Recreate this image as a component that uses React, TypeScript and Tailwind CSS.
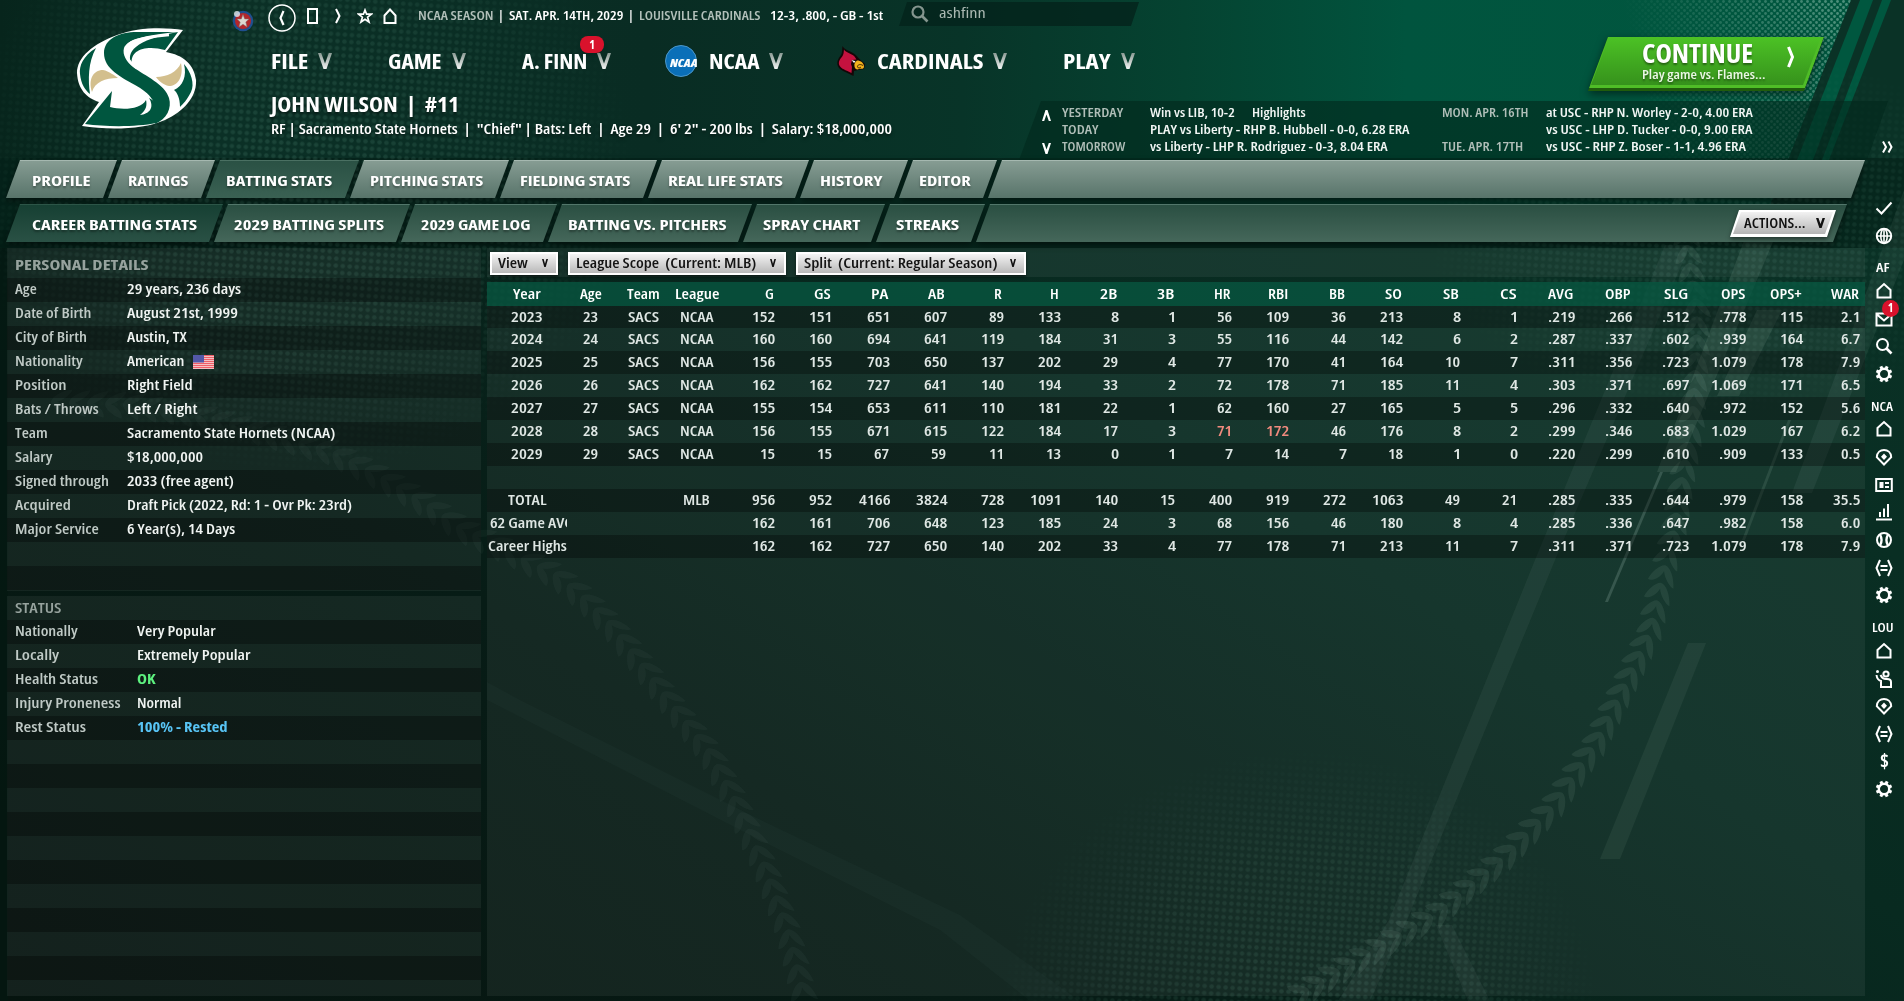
import { useLayoutEffect, useRef, useState } from 'react';
import type { ReactNode } from 'react';
import { clsx } from 'clsx';

interface FitProps {
  w: number;
  children: ReactNode;
  className?: string;
}

// Squeezes a single line of text horizontally so it takes exactly `w` pixels.
function Fit({ w, children, className }: FitProps) {
  const ref = useRef<HTMLSpanElement>(null);
  const [scale, setScale] = useState(1);

  useLayoutEffect(() => {
    if (ref.current) setScale(w / ref.current.offsetWidth);
  }, [w]);

  return (
    <span className={clsx('inline-block shrink-0 whitespace-pre', className)} style={{ width: w }}>
      <span ref={ref} className="inline-block origin-left" style={{ transform: `scaleX(${scale})` }}>
        {children}
      </span>
    </span>
  );
}

type Point = [number, number];

const rightSeam: Point[] = [
  [1684, 200], [1688, 253], [1697, 310], [1697, 350], [1692, 427], [1683, 477], [1674, 533], [1665, 567],
  [1650, 633], [1626, 683], [1596, 743], [1553, 807], [1505, 857], [1438, 913], [1341, 970], [1300, 995],
];

const leftSeam: Point[] = [
  [60, 402], [130, 405], [200, 415], [270, 435], [332, 452], [386, 480], [425, 503], [464, 530], [516, 555],
  [559, 577], [583, 597], [613, 627], [644, 667], [674, 707], [710, 753], [735, 800], [765, 867], [789, 933],
  [805, 1000],
];

function walk(points: Point[], step: number) {
  const out: { x: number; y: number; a: number }[] = [];
  let rest = 0;
  for (let i = 1; i < points.length; i++) {
    const [x0, y0] = points[i - 1];
    const [x1, y1] = points[i];
    const len = Math.hypot(x1 - x0, y1 - y0);
    const a = (Math.atan2(y1 - y0, x1 - x0) * 180) / Math.PI;
    let d = rest;
    while (d < len) {
      out.push({ x: x0 + ((x1 - x0) * d) / len, y: y0 + ((y1 - y0) * d) / len, a });
      d += step;
    }
    rest = d - len;
  }
  return out;
}

function Seam({ points, opacity }: { points: Point[]; opacity: number }) {
  return (
    <g fill="#8fb5a6" opacity={opacity}>
      {walk(points, 18).map((p, i) => (
        <path
          key={i}
          transform={`translate(${p.x} ${p.y}) rotate(${p.a - 90})`}
          d="M0 -9C5 -8 11 0 13 12C10 12 2 4 0 -3C-2 4 -10 10 -14 8C-12 0 -5 -9 0 -9Z"
        />
      ))}
    </g>
  );
}

function Backdrop() {
  return (
    <svg className="absolute inset-0" width="1904" height="1001" viewBox="0 0 1904 1001" aria-hidden="true">
      <defs>
        <linearGradient id="base" x1="0" y1="1" x2="1" y2="0.2">
          <stop offset="0" stopColor="#06140f" />
          <stop offset="0.35" stopColor="#071c16" />
          <stop offset="0.65" stopColor="#082a20" />
          <stop offset="1" stopColor="#0a3226" />
        </linearGradient>
        <linearGradient id="top" x1="0" x2="1850" gradientUnits="userSpaceOnUse">
          <stop offset="0" stopColor="#07251c" />
          <stop offset="0.12" stopColor="#0b3026" />
          <stop offset="0.35" stopColor="#092c23" />
          <stop offset="0.52" stopColor="#083428" />
          <stop offset="0.64" stopColor="#054331" />
          <stop offset="0.76" stopColor="#01543e" />
          <stop offset="1" stopColor="#00573f" />
        </linearGradient>
        <pattern id="dots" width="7" height="7" patternUnits="userSpaceOnUse" patternTransform="rotate(4)">
          <circle cx="3.5" cy="3.5" r="2.3" fill="#5f9c86" />
        </pattern>
        <pattern id="mesh" width="6" height="6" patternUnits="userSpaceOnUse">
          <circle cx="1.5" cy="1.5" r="1.4" fill="#9cc9b8" />
          <circle cx="4.5" cy="4.5" r="1.4" fill="#9cc9b8" />
        </pattern>
        <radialGradient id="glow">
          <stop offset="0" stopColor="#fff" />
          <stop offset="0.6" stopColor="#aaa" />
          <stop offset="1" stopColor="#000" />
        </radialGradient>
        <linearGradient id="ramp" x1="1640" x2="1850" y1="100" y2="60" gradientUnits="userSpaceOnUse">
          <stop offset="0" stopColor="#000" />
          <stop offset="1" stopColor="#fff" />
        </linearGradient>
        <mask id="mTop"><ellipse cx="300" cy="170" rx="340" ry="310" fill="url(#glow)" /></mask>
        <mask id="mBottom"><ellipse cx="1300" cy="1010" rx="305" ry="265" fill="url(#glow)" /></mask>
        <mask id="mRight"><ellipse cx="1720" cy="230" rx="300" ry="190" fill="url(#glow)" /></mask>
        <mask id="mMesh"><rect width="1904" height="260" fill="url(#ramp)" /></mask>
      </defs>
      <rect width="1904" height="1001" fill="url(#base)" />
      <rect x="0" y="160" width="8" height="841" fill="#041811" opacity="0.6" />

      <polygon points="0,0 1851,0 1788,160 1760,230 0,230" fill="url(#top)" />
      <rect y="158" width="1904" height="90" fill="#041f17" opacity="0.6" />
      <polygon points="1400,0 1851,0 1788,160 1400,160" fill="url(#mesh)" mask="url(#mMesh)" opacity="0.5" />
      <polygon points="1860,0 1873,0 1813,160 1797,160" fill="#00573f" />
      <polygon points="1882,0 1891,0 1829,160 1822,160" fill="#00573f" />
      <rect width="700" height="500" fill="url(#dots)" mask="url(#mTop)" opacity="0.2" />
      <polygon points="1851,0 1904,0 1904,420 1400,420 1400,200 1788,160" fill="url(#dots)" mask="url(#mRight)" opacity="0.15" />
      <rect x="980" y="740" width="640" height="261" fill="url(#dots)" mask="url(#mBottom)" opacity="0.17" />

      <g fill="#b6d4c8">
        <polygon points="1665,245 1690,245 1555,560 1407,920 1370,1001 1338,1001 1389,920 1535,560" opacity="0.06" />
        <polygon points="1748,230 1778,230 1676,472 1657,472" opacity="0.1" />
        <polygon points="1757,310 1782,310 1739,396 1717,396" opacity="0.1" />
        <polygon points="1660,472 1663,472 1608,602 1605,602" opacity="0.2" />
        <polygon points="1788,420 1791,420 1745,540 1742,540" opacity="0.12" />
        <polygon points="1904,190 1904,260 1812,493 1792,493" opacity="0.07" />
        <polygon points="1688,643 1706,643 1620,859 1600,859" opacity="0.07" />
        <polygon points="1436,925 1452,925 1490,1001 1468,1001" opacity="0.06" />
        <polygon points="487,682 520,700 765,822 960,915 1080,1001 1030,1001 940,930 750,835 487,700" opacity="0.025" />
      </g>
      <Seam points={rightSeam} opacity={0.11} />
      <Seam points={leftSeam} opacity={0.05} />
    </svg>
  );
}

function HornetsLogo() {
  return (
    <svg width="120" height="101" viewBox="0 0 120 101" className="ml-[77px] mt-[28px]">
      <path
        d="M106 2C88 -1 60 -1 40 7C16 16 0 29 0 45C1 62 10 70 22 74L5 98C30 102 66 102 88 92C108 83 120 68 119 52C117 36 106 27 89 24Z"
        fill="#fff"
      />
      <path
        d="M64 4C44 3 27 10 27 25C27 41 44 49 58 57C72 65 84 75 78 96C90 91 95 80 92 70C88 56 68 48 56 39C50 34 45 27 47 20C50 12 66 7 101 4Z"
        fill="#00563f"
      />
      <path d="M55 37C48 24 58 12 101 4L88 22C70 17 52 21 55 37Z" fill="#00563f" />
      <path d="M60 40C46 30 44 17 60 12C70 9 82 8 92 7" fill="none" stroke="#fff" strokeWidth="2.500" />
      <path d="M19 20C6 28 2 38 3 46C4 56 8 62 13 66C11 52 11 34 19 20Z" fill="#00563f" />
      <path d="M107 36C114 44 118 56 114 64C110 72 106 76 103 79C103 70 100 64 97 62C106 58 110 48 107 36Z" fill="#00563f" />
      <path d="M15 64C11 52 16 42 26 42C32 43 38 48 41 50C28 50 18 54 15 64Z" fill="#d3bf8d" />
      <path d="M104 35C107 50 100 58 92 58C86 57 81 52 79 49C90 49 100 44 104 35Z" fill="#d3bf8d" />
      <path d="M35 63L8 96C30 99 60 99 79 95C88 88 84 76 72 70C78 80 72 86 63 87C70 82 70 76 69 72C64 82 44 82 33 79Z" fill="#00563f" />
    </svg>
  );
}

function LeagueBall() {
  return (
    <svg width="22" height="23" viewBox="0 0 22 23" className="mt-1">
      <circle cx="11" cy="12" r="10.300" fill="#1f4f8f" />
      <circle cx="11" cy="12" r="8" fill="#b3262b" />
      <circle cx="5" cy="5" r="3" fill="#e6eaf0" opacity="0.8" />
      <path d="M11 5.500L12.700 10H17L13.800 13L15 18L11 15.200L7 18L8.200 13L5 10H9.300Z" fill="#dcd6d0" stroke="#7d6e6e" strokeWidth="0.500" />
    </svg>
  );
}

function Caret({ size = 'lg' }: { size?: 'lg' | 'md' | 'sm' }) {
  if (size !== 'lg') {
    return (
      <svg width={size === 'md' ? 9 : 6} height={size === 'md' ? 10 : 8} viewBox="0 0 8 10" preserveAspectRatio="none" className="mb-px shrink-0">
        <path d="M0 0H2.200L4 6L5.800 0H8L5 10H3Z" fill="#111" />
      </svg>
    );
  }
  return (
    <svg width="14" height="16" viewBox="0 0 14 16" className="shrink-0">
      <defs>
        <linearGradient id="caret" x1="0" x2="0" y1="0" y2="1">
          <stop offset="0" stopColor="#8b9a94" />
          <stop offset="1" stopColor="#f2f5f4" />
        </linearGradient>
      </defs>
      <path d="M0 0H3.200L7 10.500L10.800 0H14L8.500 16H5.500Z" fill="url(#caret)" />
    </svg>
  );
}

function NcaaLogo() {
  return (
    <span className="flex h-8 w-8 shrink-0 items-center justify-center rounded-full border border-[#4c97c9] bg-[#0a6fb8]">
      <Fit w={27} className="mt-1 text-[10px] font-extrabold italic leading-none text-white">NCAA</Fit>
    </span>
  );
}

function CardinalLogo() {
  return (
    <svg width="28" height="30" viewBox="0 0 28 30" className="shrink-0">
      <path d="M5.500 0C7 4 14 5 18 8.500C21 11 22 13 24 14.500L28 18L27 23L21 24L17 25L16.500 30C10 26 2 25 0.500 19C-0.500 14 3 11 4.500 8C5.500 5 5 3 5.500 0Z" fill="#150607" />
      <path d="M7 3.500C9 7 14 7 17.500 10.500L19.500 13.500L15 14L14 18L15 21L14.500 27C9 24 3.500 23 2 18.500C1 14 5 11.500 6 9C7 7 6.700 5 7 3.500Z" fill="#c5123f" />
      <path d="M20 14.500C24 14.500 27 17 27 21C26 24 24 22 22 23C20 24 18 23 17.500 20.500C17 17.500 18 16 20 14.500Z" fill="#f2b21c" />
      <path d="M26 19.500C23 17.500 20 19 20.500 21C21 22.500 23 22 24 21" fill="none" stroke="#4a3005" strokeWidth="1" />
      <path d="M14.500 14L18.500 15.200L17 17Z" fill="#fff" />
    </svg>
  );
}

interface MenuItem {
  label: string;
  w: number;
  icon?: ReactNode;
  badge?: string;
}

const menu: MenuItem[] = [
  { label: 'FILE', w: 37 },
  { label: 'GAME', w: 54 },
  { label: 'A. FINN', w: 65, badge: '1' },
  { label: 'NCAA', w: 50, icon: <NcaaLogo /> },
  { label: 'CARDINALS', w: 106, icon: <CardinalLogo /> },
  { label: 'PLAY', w: 48 },
];

function Divider() {
  return <span className="w-4 text-center">|</span>;
}

function TopBar() {
  return (
    <div className="flex h-9 items-center text-[13px] leading-5 text-white">
      <LeagueBall />
      <svg width="28" height="28" viewBox="0 0 28 28" className="ml-3.5" fill="none" stroke="#fff">
        <circle cx="14" cy="14" r="13" strokeWidth="1.500" />
        <path d="M15.500 7L12.500 14L15.500 21" strokeWidth="2.200" />
      </svg>
      <span className="mb-1 ml-[11px] h-4 w-[11px] border-2 border-white" />
      <svg width="6" height="16" viewBox="0 0 6 16" className="mb-1 ml-[17px]" fill="none" stroke="#fff" strokeWidth="2">
        <path d="M1 1L4.500 8L1 15" />
      </svg>
      <svg width="16" height="16" viewBox="0 0 16 16" className="mb-1 ml-4" fill="none" stroke="#fff" strokeWidth="1.700">
        <path d="M8 2L9.600 6.200H14.300L10.600 9.200L12 14L8 11.200L4 14L5.400 9.200L1.700 6.200H6.400Z" />
      </svg>
      <svg width="14" height="16" viewBox="0 0 14 16" className="mb-1 ml-2.5" fill="none" stroke="#fff" strokeWidth="2">
        <path d="M1.500 15V7.500L7 1.500L12.500 7.500V15Z" />
      </svg>
      <div className="mb-1.5 ml-[21px] flex font-semibold">
        <Fit w={75} className="text-[#b2c0ba]">NCAA SEASON</Fit>
        <Divider />
        <Fit w={114}>SAT. APR. 14TH, 2029</Fit>
        <Divider />
        <Fit w={122} className="text-[#b2c0ba]">LOUISVILLE CARDINALS</Fit>
        <Fit w={113} className="ml-[9px]">12-3, .800, - GB - 1st</Fit>
      </div>
      <div className="mb-2 ml-4 flex h-6 w-[240px] items-center bg-[#04231b]/80 pl-3 [clip-path:polygon(8px_0,100%_0,calc(100%-8px)_100%,0_100%)]">
        <svg width="18" height="18" viewBox="0 0 18 18" fill="none" stroke="#84958e" strokeWidth="2.200">
          <circle cx="7" cy="7" r="5.500" />
          <path d="M11 11L16.500 16.500" strokeWidth="2.600" />
        </svg>
        <Fit w={47} className="mb-0.5 ml-2.5 text-[14px] font-medium text-[#aab8b2]">ashfinn</Fit>
      </div>
    </div>
  );
}

function MainMenu() {
  return (
    <nav className="flex h-[52px] items-center gap-14 pb-[3px] pl-[39px] [text-shadow:0_2px_3px_rgba(0,0,0,0.5)]">
      {menu.map((item) => (
        <button key={item.label} className="relative flex items-center gap-2.5">
          {item.icon && <span className="-ml-0.5 mr-0.5">{item.icon}</span>}
          <Fit w={item.w} className="mb-px text-left text-[22px] font-bold leading-8 text-white">{item.label}</Fit>
          <Caret />
          {item.badge && (
            <span className="absolute -top-2 left-[58px] flex h-[17px] w-6 items-center justify-center rounded-lg bg-[#d9122c] text-[12px] font-bold text-white shadow-md">
              {item.badge}
            </span>
          )}
        </button>
      ))}
    </nav>
  );
}

function ContinueButton() {
  return (
    <button className="ml-auto mr-20 mt-9 block h-14 w-[236px] drop-shadow-[0_3px_4px_rgba(0,0,0,0.5)]">
      <span className="block h-[54px] bg-[#205c0c] pb-[3px] [clip-path:polygon(20px_0,100%_0,calc(100%-20px)_100%,0_100%)]">
        <span className="block h-full bg-[#4fbd27] px-[3px] pb-[3px] [clip-path:polygon(19px_0,100%_0,calc(100%-19px)_100%,0_100%)]">
          <span className="flex h-full items-center justify-between bg-linear-to-b from-[#4cc225] to-[#36921c] pl-[51px] pr-[26px] [clip-path:polygon(18px_0,100%_0,calc(100%-18px)_100%,0_100%)]">
            <span className="flex flex-col items-start text-white [text-shadow:0_2px_2px_rgba(0,0,0,0.4)]">
              <Fit w={111} className="text-left text-[27px] font-bold leading-[26px]">CONTINUE</Fit>
              <Fit w={124} className="text-left text-[13px] font-semibold leading-[17px] text-[#eaf7e4]">Play game vs. Flames...</Fit>
            </span>
            <svg width="8" height="22" viewBox="0 0 8 22" className="mb-2" fill="none" stroke="#fff" strokeWidth="3">
              <path d="M1.500 1L5.500 11L1.500 21" />
            </svg>
          </span>
        </span>
      </span>
    </button>
  );
}

function Schedule() {
  return (
    <div className="ml-auto mr-4 mt-[13px] flex h-[59px] w-[869px] bg-[#02281d]/60 pl-[23px] pt-[3px] text-[13px] font-semibold leading-[17px] text-[#f1f6f4] [clip-path:polygon(22px_0,100%_0,calc(100%-21px)_100%,0_100%)]">
      <div className="mr-[11px] flex flex-col justify-between pb-1.5 pt-1.5">
        <svg width="9" height="11" viewBox="0 0 9 11"><path d="M0 11H2.200L4.500 4.500L6.800 11H9L5.500 0H3.500Z" fill="#fff" /></svg>
        <svg width="9" height="11" viewBox="0 0 9 11"><path d="M0 0H2.200L4.500 6.500L6.800 0H9L5.500 11H3.500Z" fill="#fff" /></svg>
      </div>
      <div className="flex w-[88px] flex-col text-[#b0beb8]">
        <Fit w={61}>YESTERDAY</Fit>
        <Fit w={36}>TODAY</Fit>
        <Fit w={63}>TOMORROW</Fit>
      </div>
      <div className="flex w-[292px] flex-col">
        <span className="flex gap-[17px]">
          <Fit w={85}>Win vs LIB, 10-2</Fit>
          <Fit w={54}>Highlights</Fit>
        </span>
        <Fit w={259}>PLAY vs Liberty - RHP B. Hubbell - 0-0, 6.28 ERA</Fit>
        <Fit w={238}>vs Liberty - LHP R. Rodriguez - 0-3, 8.04 ERA</Fit>
      </div>
      <div className="flex w-[104px] flex-col justify-between pb-[5px] text-[#b0beb8]">
        <Fit w={86}>MON. APR. 16TH</Fit>
        <Fit w={81}>TUE. APR. 17TH</Fit>
      </div>
      <div className="flex flex-col">
        <Fit w={207}>at USC - RHP N. Worley - 2-0, 4.00 ERA</Fit>
        <Fit w={206}>vs USC - LHP D. Tucker - 0-0, 9.00 ERA</Fit>
        <Fit w={200}>vs USC - RHP Z. Boser - 1-1, 4.96 ERA</Fit>
      </div>
    </div>
  );
}

function Header() {
  return (
    <header className="flex h-40">
      <div className="w-[232px] shrink-0">
        <HornetsLogo />
      </div>
      <div className="flex flex-1 flex-col">
        <div className="flex h-[88px]">
          <div>
            <TopBar />
            <MainMenu />
          </div>
          <ContinueButton />
        </div>
        <div className="flex h-[72px]">
          <div className="flex flex-col pl-[39px] text-white [text-shadow:0_2px_3px_rgba(0,0,0,0.5)]">
            <Fit w={188} className="-mt-[2px] text-[22px] font-bold leading-[34px]">{'JOHN WILSON  |  #11'}</Fit>
            <Fit w={621} className="text-[14px] font-semibold leading-[18px]">
              {'RF | Sacramento State Hornets  |  "Chief" | Bats: Left  |  Age 29  |  6\' 2" - 200 lbs  |  Salary: $18,000,000'}
            </Fit>
          </div>
          <Schedule />
        </div>
      </div>
    </header>
  );
}

interface Tab {
  label: string;
  box: number;
  w: number;
}

const mainTabs: Tab[] = [
  { label: 'PROFILE', box: 111, w: 59 },
  { label: 'RATINGS', box: 107, w: 61 },
  { label: 'BATTING STATS', box: 153, w: 106 },
  { label: 'PITCHING STATS', box: 159, w: 113 },
  { label: 'FIELDING STATS', box: 157, w: 111 },
  { label: 'REAL LIFE STATS', box: 161, w: 115 },
  { label: 'HISTORY', box: 108, w: 62 },
  { label: 'EDITOR', box: 98, w: 52 },
];

const subTabs: Tab[] = [
  { label: 'CAREER BATTING STATS', box: 217, w: 165 },
  { label: '2029 BATTING SPLITS', box: 196, w: 150 },
  { label: '2029 GAME LOG', box: 156, w: 110 },
  { label: 'BATTING VS. PITCHERS', box: 204, w: 158 },
  { label: 'SPRAY CHART', box: 142, w: 97 },
  { label: 'STREAKS', box: 109, w: 63 },
];

interface TabBarProps {
  tabs: Tab[];
  active: string;
  tone: string;
  activeTone: string;
  barWidth: string;
  children?: ReactNode;
}

function TabBar({ tabs, active, tone, activeTone, barWidth, children }: TabBarProps) {
  const shape = '[clip-path:polygon(14px_0,100%_0,calc(100%-14px)_100%,0_100%)]';
  return (
    <div className={clsx('-ml-px flex h-[38px] drop-shadow-[0_3px_3px_rgba(0,0,0,0.5)]', barWidth)}>
      {tabs.map((tab, i) => (
        <button
          key={tab.label}
          className={clsx(
            '-mr-[9px] flex shrink-0 items-center border-t bg-linear-to-b',
            shape,
            tab.label === active ? activeTone : tone,
            i === 0 ? 'pl-[26px]' : 'pl-5',
          )}
          style={{ width: tab.box }}
        >
          <Fit w={tab.w} className="text-left text-[15px] font-bold leading-6 text-white [text-shadow:0_2px_2px_rgba(0,0,0,0.35)]">{tab.label}</Fit>
        </button>
      ))}
      <div className={clsx('flex flex-1 items-center justify-end border-t bg-linear-to-b', shape, tone)}>{children}</div>
    </div>
  );
}

interface Detail {
  label: string;
  lw: number;
  value: string;
  vw: number;
  tone?: string;
}

const personal: Detail[] = [
  { label: 'Age', lw: 22, value: '29 years, 236 days', vw: 114 },
  { label: 'Date of Birth', lw: 77, value: 'August 21st, 1999', vw: 111 },
  { label: 'City of Birth', lw: 72, value: 'Austin, TX', vw: 60 },
  { label: 'Nationality', lw: 68, value: 'American', vw: 58 },
  { label: 'Position', lw: 51, value: 'Right Field', vw: 66 },
  { label: 'Bats / Throws', lw: 84, value: 'Left / Right', vw: 70 },
  { label: 'Team', lw: 33, value: 'Sacramento State Hornets (NCAA)', vw: 208 },
  { label: 'Salary', lw: 38, value: '$18,000,000', vw: 76 },
  { label: 'Signed through', lw: 94, value: '2033 (free agent)', vw: 107 },
  { label: 'Acquired', lw: 56, value: 'Draft Pick (2022, Rd: 1 - Ovr Pk: 23rd)', vw: 225 },
  { label: 'Major Service', lw: 84, value: '6 Year(s), 14 Days', vw: 108 },
];

const status: Detail[] = [
  { label: 'Nationally', lw: 63, value: 'Very Popular', vw: 79 },
  { label: 'Locally', lw: 44, value: 'Extremely Popular', vw: 114 },
  { label: 'Health Status', lw: 83, value: 'OK', vw: 18, tone: 'text-[#5df07f] font-bold' },
  { label: 'Injury Proneness', lw: 106, value: 'Normal', vw: 45 },
  { label: 'Rest Status', lw: 71, value: '100% - Rested', vw: 90, tone: 'text-[#58c4f5] font-bold' },
];

function Flag() {
  return (
    <svg width="21" height="14" viewBox="0 0 21 14" className="ml-2 mt-0.5">
      <rect width="21" height="14" fill="#f6d9da" />
      {[0, 2, 4, 6, 8, 10, 12].map((y) => (
        <rect key={y} y={y} width="21" height="1.200" fill="#ee5f68" />
      ))}
      <rect width="11" height="7.500" fill="#5358a8" />
    </svg>
  );
}

interface DetailPanelProps {
  title: string;
  titleWidth: number;
  titleClass: string;
  rows: Detail[];
  blanks: number;
  labelClass: string;
  className: string;
}

function DetailPanel({ title, titleWidth, titleClass, rows, blanks, labelClass, className }: DetailPanelProps) {
  return (
    <section className={clsx('overflow-hidden bg-white/6 text-[14px] font-semibold', className)}>
      <h2 className={clsx('flex items-center pl-2 text-[#97a39e]', titleClass)}>
        <Fit w={titleWidth}>{title}</Fit>
      </h2>
      {rows.map((row, i) => (
        <div key={row.label} className={clsx('flex h-6 items-center pb-[3px] pl-2', i % 2 === 0 && 'bg-black/30')}>
          <span className={clsx('flex shrink-0 text-[#bfc9c5]', labelClass)}>
            <Fit w={row.lw}>{row.label}</Fit>
          </span>
          <Fit w={row.vw} className={row.tone ?? 'text-[#f0f4f2]'}>{row.value}</Fit>
          {row.label === 'Nationality' && <Flag />}
        </div>
      ))}
      {Array.from({ length: blanks }, (_, i) => (
        <div key={i} className={clsx('h-6', (rows.length + i) % 2 === 0 && 'bg-black/30')} />
      ))}
    </section>
  );
}

const columns = ['Year', 'Age', 'Team', 'League', 'G', 'GS', 'PA', 'AB', 'R', 'H', '2B', '3B', 'HR', 'RBI', 'BB', 'SO', 'SB', 'CS', 'AVG', 'OBP', 'SLG', 'OPS', 'OPS+', 'WAR'];

const seasons = [
  '2023,23,SACS,NCAA,152,151,651,607,89,133,8,1,56,109,36,213,8,1,.219,.266,.512,.778,115,2.1',
  '2024,24,SACS,NCAA,160,160,694,641,119,184,31,3,55,116,44,142,6,2,.287,.337,.602,.939,164,6.7',
  '2025,25,SACS,NCAA,156,155,703,650,137,202,29,4,77,170,41,164,10,7,.311,.356,.723,1.079,178,7.9',
  '2026,26,SACS,NCAA,162,162,727,641,140,194,33,2,72,178,71,185,11,4,.303,.371,.697,1.069,171,6.5',
  '2027,27,SACS,NCAA,155,154,653,611,110,181,22,1,62,160,27,165,5,5,.296,.332,.640,.972,152,5.6',
  '2028,28,SACS,NCAA,156,155,671,615,122,184,17,3,71,172,46,176,8,2,.299,.346,.683,1.029,167,6.2',
  '2029,29,SACS,NCAA,15,15,67,59,11,13,0,1,7,14,7,18,1,0,.220,.299,.610,.909,133,0.5',
  '',
  'TOTAL,,,MLB,956,952,4166,3824,728,1091,140,15,400,919,272,1063,49,21,.285,.335,.644,.979,158,35.5',
  '62 Game AVG,,,,162,161,706,648,123,185,24,3,68,156,46,180,8,4,.285,.336,.647,.982,158,6.0',
  'Career Highs,,,,162,162,727,650,140,202,33,4,77,178,71,213,11,7,.311,.371,.723,1.079,178,7.9',
].map((line) => line.split(','));

const grid = 'grid grid-cols-[80px_48px_56px_51px_54px_repeat(19,57.100px)] items-center';

// Width of a rendered cell, from the advance of each kind of character.
function cellWidth(text: string) {
  const fixed: Record<string, number> = {
    Year: 28, Age: 22, Team: 33, League: 44, SACS: 31, NCAA: 33, TOTAL: 38, MLB: 27, '62 Game AVG': 84, 'Career Highs': 79,
    G: 9, GS: 17, PA: 17, AB: 17, R: 8, H: 9, '2B': 17, '3B': 17, HR: 17, RBI: 20, BB: 16, SO: 17, SB: 16, CS: 16,
    AVG: 25, OBP: 25, SLG: 24, OPS: 24, 'OPS+': 32, WAR: 28,
  };
  if (fixed[text]) return fixed[text];
  return [...text].reduce((sum, c) => sum + (c === '.' ? 3.6 : 7.9), 0);
}

function Cell({ text, col, className }: { text: string; col: number; className?: string }) {
  if (!text) return <span />;
  return (
    <span
      className={clsx(
        'flex min-w-0',
        col === 0 && text.startsWith('62') ? 'justify-start overflow-hidden pl-[3px]' : col < 4 ? 'justify-center' : 'justify-end',
        className,
      )}
    >
      <Fit w={cellWidth(text)}>{text}</Fit>
    </span>
  );
}

function DropButton({ label, w, box }: { label: string; w: number; box: string }) {
  return (
    <button className={clsx('flex h-[23px] items-center justify-between border-2 border-white bg-linear-to-b from-[#f4f4f4] to-[#b9b9b9] pl-1.5 pr-2 text-[14px] font-semibold text-[#151515] shadow-[0_2px_3px_rgba(0,0,0,0.5)]', box)}>
      <Fit w={w} className="mb-0.5 text-left leading-5">{label}</Fit>
      <Caret size="sm" />
    </button>
  );
}

function StatsPanel() {
  return (
    <section className="flex w-[1378px] flex-col">
      <div className="flex h-[29px] gap-2.5 bg-white/6 pl-[3px] pt-1">
        <DropButton label="View" w={30} box="w-[68px]" />
        <DropButton label="League Scope  (Current: MLB)" w={181} box="w-[218px]" />
        <DropButton label="Split  (Current: Regular Season)" w={193} box="w-[230px]" />
      </div>
      <div className="mt-[5px] flex-1 bg-white/6 text-[14px] font-semibold text-[#dfe7e4]">
        <div className={clsx(grid, 'h-6 bg-[#04563f]/75 pb-0.5')}>
          {columns.map((c, i) => (
            <Cell key={c} text={c} col={i} className={i > 3 ? 'pr-[2px] text-white' : 'text-white'} />
          ))}
        </div>
        {seasons.map((row, r) => (
          <div key={r} className={clsx(grid, 'pb-0.5', r === 0 ? 'h-[22px]' : 'h-[23px]', r % 2 === 0 && 'bg-black/30')}>
            {row.map((v, i) => (
              <Cell key={i} text={v} col={i} className={r === 5 && (i === 12 || i === 13) ? 'text-[#f08a7e]' : undefined} />
            ))}
          </div>
        ))}
      </div>
    </section>
  );
}

const glyphs: Record<string, ReactNode> = {
  check: <path d="M1.500 9.500L6.500 14.500L16.500 3.500" />,
  globe: (
    <>
      <circle cx="9" cy="9" r="7.200" />
      <ellipse cx="9" cy="9" rx="3.200" ry="7.200" strokeWidth="1.600" />
      <path d="M2 9H16M9 2V16" strokeWidth="1.600" />
    </>
  ),
  home: <path d="M2.500 15.500V8L9 2L15.500 8V15.500Z" />,
  mail: <path d="M1.500 3.500H16.500V15.500H1.500ZM2 4.500L9 10.500L16 4.500" />,
  search: (
    <>
      <circle cx="7.500" cy="7.500" r="5.500" />
      <path d="M11.500 11.500L16.500 16.500" strokeWidth="2.600" />
    </>
  ),
  gear: (
    <>
      <circle cx="9" cy="9" r="5.200" strokeWidth="2.400" />
      {[22.5, 67.5, 112.5, 157.5, 202.5, 247.5, 292.5, 337.5].map((a) => (
        <path key={a} d="M9 3.800V0.800" strokeWidth="3" transform={`rotate(${a} 9 9)`} />
      ))}
    </>
  ),
  field: (
    <>
      <path d="M9 16.500L1.800 9.200C2 4 5.500 2 9 2C12.500 2 16 4 16.200 9.200Z" />
      <path d="M9 5.500L12 8.700L9 12L6 8.700Z" fill="#fff" stroke="none" />
    </>
  ),
  card: (
    <>
      <path d="M1.200 3H16.800V15H1.200Z" />
      <path d="M4.500 6H8.500V12H4.500ZM10 6H14V8H10ZM10 10H14V12H10Z" fill="#fff" stroke="none" />
    </>
  ),
  bars: <path d="M1 16.500H17M5 14V9M9 14V5.500M13 14V1" />,
  ball: (
    <>
      <circle cx="9" cy="9" r="7" />
      <path d="M5 3.500C7 7 7 11 5 14.500M13 3.500C11 7 11 11 13 14.500" strokeWidth="2.400" />
    </>
  ),
  compare: <path d="M5 1L1.500 9L5 17M13 1L16.500 9L13 17M5.500 7H12.500M5.500 11H12.500" />,
  pitcher: (
    <>
      <circle cx="11" cy="4" r="2.600" />
      <circle cx="2.500" cy="1.500" r="1.500" fill="#fff" stroke="none" />
      <path d="M1.500 5C2 9 4 10.500 6 11V17H16V12C16 9.500 14 9 12 9C9 9.500 7 8 5.500 5" />
    </>
  ),
};

const rail = ['check', 'globe', 'AF', 'home', 'mail', 'search', 'gear', 'NCA', 'home', 'field', 'card', 'bars', 'ball', 'compare', 'gear', 'LOU', 'home', 'pitcher', 'field', 'compare', '$', 'gear'];

const railWidths: Record<string, number> = { AF: 13, NCA: 22, LOU: 21 };

function Rail() {
  return (
    <aside className="flex w-[39px] flex-col items-center pt-[34px]">
      {rail.map((name, i) => (
        <div key={i} className="relative flex h-[27.700px] w-full shrink-0 items-center justify-end pr-[11px] text-white">
          {glyphs[name] ? (
            <svg width="18" height="18" viewBox="0 0 18 18" fill="none" stroke="#fff" strokeWidth="2">
              {glyphs[name]}
            </svg>
          ) : name === '$' ? (
            <span className="mr-1 text-[19px] font-bold leading-none">$</span>
          ) : (
            <Fit w={railWidths[name]} className={clsx('mt-2 text-[13px] font-semibold leading-5', name === 'AF' && 'mr-1')}>{name}</Fit>
          )}
          {name === 'mail' && (
            <span className="absolute right-[5px] top-[-5px] flex h-[17px] w-[17px] items-center justify-center rounded-full bg-[#d9122c] text-[12px] font-bold">
              1
            </span>
          )}
        </div>
      ))}
    </aside>
  );
}

export default function App() {
  return (
    <div className="relative h-[1001px] w-[1904px] overflow-hidden bg-[#071e17] font-['Open_Sans','Noto_Sans',sans-serif] font-stretch-condensed">
      <Backdrop />
      <div className="relative">
        <Header />
        <svg width="11" height="12" viewBox="0 0 11 12" className="absolute left-[1882px] top-[141px]" fill="none" stroke="#fff" strokeWidth="2">
          <path d="M1 0.500L4 6L1 11.500M6.500 0.500L9.500 6L6.500 11.500" />
        </svg>
        <div className="flex h-[841px]">
          <div className="flex w-[1865px] flex-col pl-[7px]">
            <TabBar
              tabs={mainTabs}
              active="BATTING STATS"
              tone="border-[#a5b8b0] from-[#869c93] to-[#58746a]"
              activeTone="border-[#4a7062] from-[#2a5144] to-[#3a6153]"
              barWidth="w-[1859px]"
            />
            <div className="mt-1.5">
              <TabBar
                tabs={subTabs}
                active="CAREER BATTING STATS"
                tone="border-[#52766a] from-[#2a4f42] to-[#45675a]"
                activeTone="border-[#2c5547] from-[#164033] to-[#2a5145]"
                barWidth="w-[1841px]"
              >
                <span className="mr-[11px] block h-[27px] w-[106px] drop-shadow-[0_2px_2px_rgba(0,0,0,0.5)]">
                  <button className="block h-full w-full bg-white p-[3px] pt-0.5 [clip-path:polygon(9px_0,100%_0,calc(100%-9px)_100%,0_100%)]">
                    <span className="flex h-full items-center justify-between bg-linear-to-b from-[#f2f2f2] to-[#b4b4b4] pl-[11px] pr-2 text-[14px] font-semibold text-[#111] [clip-path:polygon(8px_0,100%_0,calc(100%-8px)_100%,0_100%)]">
                      <Fit w={62} className="text-left leading-5">ACTIONS...</Fit>
                      <Caret size="md" />
                    </span>
                  </button>
                </span>
              </TabBar>
            </div>
            <main className="mt-1.5 flex h-[748px] gap-1.5">
              <div className="flex w-[474px] flex-col">
                <DetailPanel
                  title="PERSONAL DETAILS"
                  titleWidth={134}
                  titleClass="h-[30px] text-[15px] font-bold pt-[3px]"
                  rows={personal}
                  blanks={2}
                  labelClass="w-[112px]"
                  className="h-[343px]"
                />
                <DetailPanel
                  title="STATUS"
                  titleWidth={47}
                  titleClass="h-6 pb-0.5 text-[14px] font-semibold"
                  rows={status}
                  blanks={11}
                  labelClass="w-[122px]"
                  className="mt-[5px] h-[400px]"
                />
              </div>
              <StatsPanel />
            </main>
          </div>
          <Rail />
        </div>
      </div>
    </div>
  );
}
